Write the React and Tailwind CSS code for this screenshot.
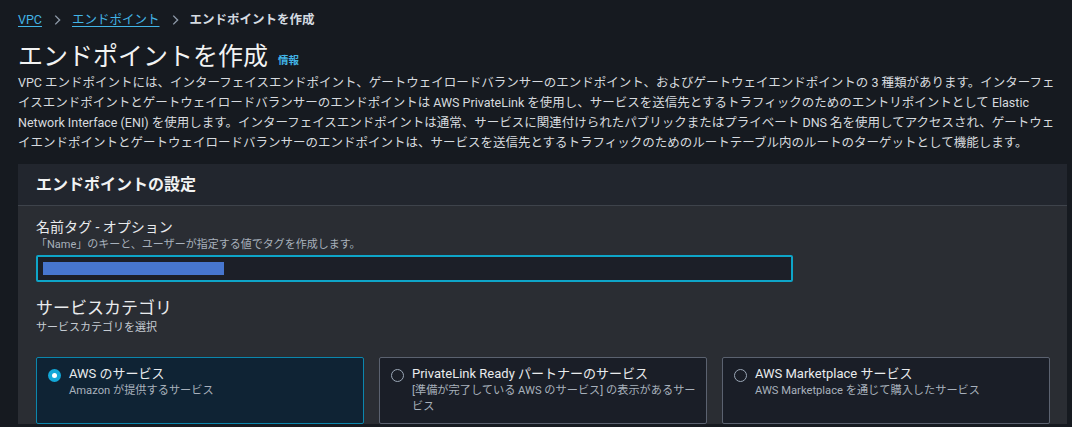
import React from "react";

function Chevron() {
  return (
    <svg width="14" height="14" viewBox="0 0 16 16" className="mx-[8px]">
      <path d="M6 3l5 5-5 5" fill="none" stroke="#8d99a8" strokeWidth="1.6" />
    </svg>
  );
}

function RadioCard({ title, desc, selected }) {
  return (
    <div
      className={`flex-1 h-[67px] rounded-[2px] border pl-[11px] pr-[6px] pt-[7px] flex gap-[8px] ${
        selected ? "bg-[#0f2334] border-[#0b86ad]" : "bg-[#1a1e27] border-[#5b6270]"
      }`}
    >
      <div className="pt-[4px]">
        {selected ? (
          <div className="w-[13px] h-[13px] rounded-full bg-[#13a8d8] flex items-center justify-center">
            <div className="w-[5px] h-[5px] rounded-full bg-white" />
          </div>
        ) : (
          <div className="w-[13px] h-[13px] rounded-full border border-[#9ba7b6]" />
        )}
      </div>
      <div className="flex-1">
        <div className="text-[13px] leading-[18px] text-[#e9ebed]">{title}</div>
        <div className="text-[11.2px] leading-[16px] text-[#a8b1bc] break-all">{desc}</div>
      </div>
    </div>
  );
}

export default function App() {
  return (
    <div
      className="w-[1072px] h-[427px] overflow-hidden bg-[#161a20] pl-[18px] pr-[5px] text-[#d1d5db]"
      style={{ fontFamily: 'Roboto, "Noto Sans CJK JP", sans-serif' }}
    >
      <div className="flex items-center h-[22px] mt-[9px] text-[12.5px]">
        <span className="text-[#42b4e6] underline underline-offset-2">VPC</span>
        <Chevron />
        <span className="text-[#42b4e6] underline underline-offset-2">エンドポイント</span>
        <Chevron />
        <span className="font-bold text-[#d5dbe1]">エンドポイントを作成</span>
      </div>
      <div className="flex items-end gap-[10px] h-[34px] mt-[7px]">
        <span className="text-[25px] leading-[30px] text-[#f2f3f3]">エンドポイントを作成</span>
        <span className="text-[10.5px] font-bold text-[#42b4e6] pb-[3px]">情報</span>
      </div>
      <p className="text-[12.5px] leading-[20px] text-[#d6dadf] pr-[4px] mt-[1px]">
        VPC エンドポイントには、インターフェイスエンドポイント、ゲートウェイロードバランサーのエンドポイント、およびゲートウェイエンドポイントの 3 種類があります。インターフェイスエンドポイントとゲートウェイロードバランサーのエンドポイントは AWS PrivateLink を使用し、サービスを送信先とするトラフィックのためのエントリポイントとして Elastic Network Interface (ENI) を使用します。インターフェイスエンドポイントは通常、サービスに関連付けられたパブリックまたはプライベート DNS 名を使用してアクセスされ、ゲートウェイエンドポイントとゲートウェイロードバランサーのエンドポイントは、サービスを送信先とするトラフィックのためのルートテーブル内のルートのターゲットとして機能します。
      </p>
      <div className="mt-[11px] w-[1049px] bg-[#2a2d33]">
        <div className="h-[42px] bg-[#22262e] border-b border-[#3e434b] flex items-center px-[18px]">
          <span className="text-[16px] font-bold text-[#f2f3f3]">エンドポイントの設定</span>
        </div>
        <div className="px-[18px] pt-[11px]">
          <div className="text-[14px] leading-[20px] text-[#e9ebed]">名前タグ - オプション</div>
          <div className="text-[11px] leading-[15px] text-[#a8b1bc]">
            「Name」のキーと、ユーザーが指定する値でタグを作成します。
          </div>
          <div className="mt-[3px] w-[757px] h-[27px] border-2 border-[#0ea5c8] rounded-[2px] bg-[#1c1f28] flex items-center px-[5px]">
            <div className="w-[181px] h-[13px] bg-[#4776cf]" />
          </div>
          <div className="mt-[14px] text-[17px] leading-[24px] text-[#e9ebed]">サービスカテゴリ</div>
          <div className="text-[11px] leading-[16px] text-[#c6ccd3]">サービスカテゴリを選択</div>
          <div className="mt-[21px] flex gap-[15px] w-[1014px]">
            <RadioCard selected title="AWS のサービス" desc="Amazon が提供するサービス" />
            <RadioCard
              title="PrivateLink Ready パートナーのサービス"
              desc="[準備が完了している AWS のサービス] の表示があるサービス"
            />
            <RadioCard
              title="AWS Marketplace サービス"
              desc="AWS Marketplace を通じて購入したサービス"
            />
          </div>
        </div>
      </div>
    </div>
  );
}
